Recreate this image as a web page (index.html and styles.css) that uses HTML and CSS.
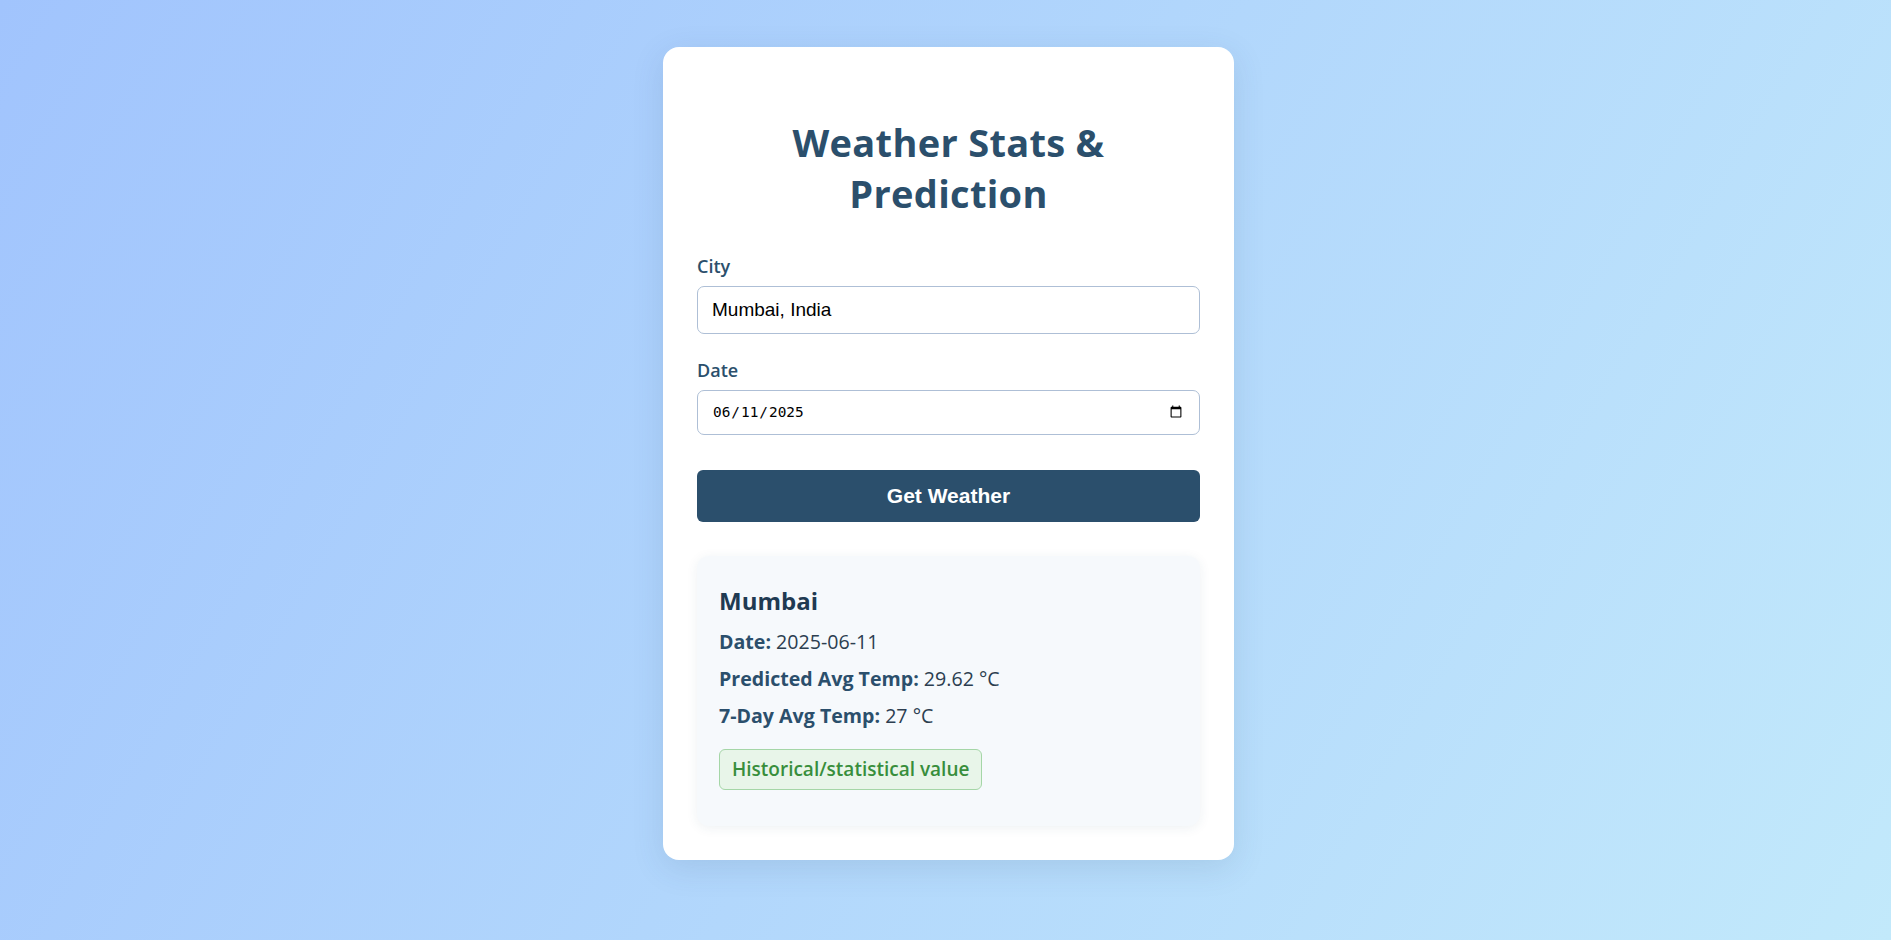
FILE: index.html
```html
<!DOCTYPE html>
<html lang="en">
<head>
<meta charset="utf-8">
<title>Weather Stats &amp; Prediction</title>
<link rel="stylesheet" href="styles.css">
</head>
<body>
<main class="card">
  <h1 class="title">Weather Stats &amp;<br>Prediction</h1>
  <form class="form">
    <label class="label" for="city">City</label>
    <input class="input input-city" id="city" type="text" value="Mumbai, India">
    <label class="label label-date" for="date">Date</label>
    <input class="input input-date" id="date" type="date" value="2025-06-11">
    <button class="btn" type="button">Get Weather</button>
  </form>
  <section class="result">
    <h2 class="result-city">Mumbai</h2>
    <p class="row"><strong>Date:</strong> 2025-06-11</p>
    <p class="row"><strong>Predicted Avg Temp:</strong> 29.62 °C</p>
    <p class="row"><strong>7-Day Avg Temp:</strong> 27 °C</p>
    <div class="badge">Historical/statistical value</div>
  </section>
</main>
</body>
</html>
```

FILE: styles.css
```css
html, body {
  margin: 0;
  padding: 0;
  height: 100%;
}
body {
  background: linear-gradient(120deg, #a1c4fd 0%, #c2e9fb 100%);
  font-family: "Open Sans", "Noto Sans", sans-serif;
  display: flex;
  justify-content: center;
  align-items: flex-start;
  padding: 47px 0 0 6px;
  box-sizing: border-box;
}
.card {
  width: 571px;
  box-sizing: border-box;
  background: #ffffff;
  border-radius: 16px;
  box-shadow: 0 8px 32px rgba(44, 79, 108, 0.13);
  padding: 34px;
}
.title {
  margin: 36px 0 35px;
  text-align: center;
  color: #2b4f6c;
  font-size: 38px;
  line-height: 51px;
  font-weight: 700;
  letter-spacing: 0.3px;
}
.form {
  display: flex;
  flex-direction: column;
}
.label {
  color: #2b4f6c;
  font-size: 18px;
  font-weight: 600;
  line-height: 24px;
  margin-bottom: 8px;
}
.label-date {
  margin-top: 24px;
}
.input {
  box-sizing: border-box;
  width: 100%;
  border: 1px solid #aebfd6;
  border-radius: 7px;
  background: #fff;
  color: #000;
  margin: 0;
  outline: none;
}
.input-city {
  height: 48px;
  padding: 0 14px;
  font-family: "Liberation Sans", Arial, sans-serif;
  font-size: 19px;
}
.input-date {
  height: 45px;
  padding: 0 14px;
  font-family: "DejaVu Sans Mono", "Liberation Mono", monospace;
  font-size: 14.4px;
}
.btn {
  margin-top: 35px;
  height: 52px;
  border: none;
  border-radius: 6px;
  background: #2b4f6c;
  color: #fff;
  font-family: "Liberation Sans", Arial, sans-serif;
  font-weight: 700;
  font-size: 21px;
  cursor: pointer;
}
.result {
  margin-top: 34px;
  background: #f6f9fc;
  border-radius: 12px;
  box-shadow: 0 2px 12px rgba(44, 79, 108, 0.08);
  padding: 27px 22px 36px;
  color: #2c3e50;
}
.result-city {
  margin: 0 0 4px;
  font-size: 24px;
  line-height: 36px;
  font-weight: 700;
  color: #1f3a52;
}
.row {
  margin: 0;
  font-size: 19.6px;
  line-height: 37px;
  color: #2c3e50;
}
.row strong {
  color: #2b4f6c;
  font-weight: 700;
}
.badge {
  display: inline-block;
  margin-top: 15px;
  padding: 0 12px;
  height: 41px;
  line-height: 39px;
  box-sizing: border-box;
  background: #e8f5e9;
  border: 1px solid #a5d6a7;
  border-radius: 6px;
  color: #388e3c;
  font-size: 19px;
  font-weight: 600;
}
```
